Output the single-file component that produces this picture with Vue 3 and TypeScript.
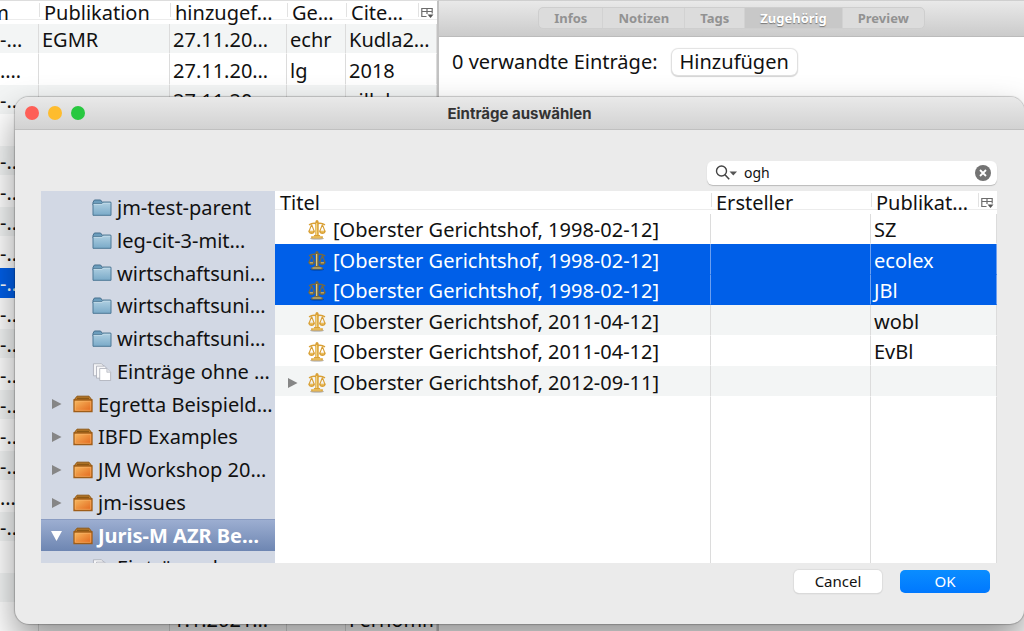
<script setup lang="ts">
import { ref } from 'vue'

interface BackRow {
  lead: string
  pub: string
  added: string
  court: string
  key: string
  selected?: boolean
}

interface Entry {
  title: string
  creator: string
  pub: string
  selected?: boolean
  expandable?: boolean
}

interface Node {
  label: string
  kind: 'folder' | 'unfiled' | 'library'
  open?: boolean
}

const row = (lead: string, pub = '', added = '', court = '', key = ''): BackRow => ({ lead, pub, added, court, key })

const backRows: BackRow[] = [
  row('-…', 'EGMR', '27.11.20…', 'echr', 'Kudla2…'),
  row('.…', '', '27.11.20…', 'lg', '2018'),
  row('-…', '', '27.11.20…', '', 'cillak…'),
  row(''),
  row('-…'),
  row('-…'),
  row('-…'),
  row('-…'),
  { ...row('-…'), selected: true },
  row('-…'),
  row('-…'),
  row('-…'),
  row('-…'),
  row('-…'),
  row('-…'),
  row('…'),
  row('-…'),
  row(''),
  row(''),
  row('', '', '1.1.2021…', '', 'Fernomm'),
]

const tabs = ['Infos', 'Notizen', 'Tags', 'Zugehörig', 'Preview']
const activeTab = ref('Zugehörig')
const query = ref('ogh')

const nodes: Node[] = [
  { label: 'jm-test-parent', kind: 'folder' },
  { label: 'leg-cit-3-mit…', kind: 'folder' },
  { label: 'wirtschaftsuni…', kind: 'folder' },
  { label: 'wirtschaftsuni…', kind: 'folder' },
  { label: 'wirtschaftsuni…', kind: 'folder' },
  { label: 'Einträge ohne …', kind: 'unfiled' },
  { label: 'Egretta Beispield…', kind: 'library' },
  { label: 'IBFD Examples', kind: 'library' },
  { label: 'JM Workshop 20…', kind: 'library' },
  { label: 'jm-issues', kind: 'library' },
  { label: 'Juris-M AZR Be…', kind: 'library', open: true },
  { label: 'Einträge ohne …', kind: 'unfiled' },
]

const entries: Entry[] = [
  { title: '[Oberster Gerichtshof, 1998-02-12]', creator: '', pub: 'SZ' },
  { title: '[Oberster Gerichtshof, 1998-02-12]', creator: '', pub: 'ecolex', selected: true },
  { title: '[Oberster Gerichtshof, 1998-02-12]', creator: '', pub: 'JBl', selected: true },
  { title: '[Oberster Gerichtshof, 2011-04-12]', creator: '', pub: 'wobl' },
  { title: '[Oberster Gerichtshof, 2011-04-12]', creator: '', pub: 'EvBl' },
  { title: '[Oberster Gerichtshof, 2012-09-11]', creator: '', pub: '', expandable: true },
]
</script>

<template>
  <div class="desktop">
    <svg class="defs" aria-hidden="true">
      <defs>
        <linearGradient id="folderFill" x1="0" y1="0" x2="0" y2="1">
          <stop offset="0" stop-color="#b0d0e2" />
          <stop offset="1" stop-color="#7aaac8" />
        </linearGradient>
        <linearGradient id="boxFill" x1="0" y1="0" x2="1" y2="1">
          <stop offset="0" stop-color="#f8bc62" />
          <stop offset="1" stop-color="#e2641a" />
        </linearGradient>
        <symbol id="picker" viewBox="0 0 13 12">
          <path d="M.8 1.500h10.400v5M.8 1v8.500h4.700M.8 4.500h10.400M6 1v6" fill="none" stroke="#6c6c6c" stroke-width="1.200" />
          <path d="M6.500 7.500h6l-3 3.500z" fill="#555" />
        </symbol>
        <symbol id="scales" viewBox="0 0 18 20">
          <ellipse cx="9" cy="18.600" rx="7" ry="1.100" fill="#000" opacity=".25" />
          <path d="M1 4.800Q5 2.400 9 3.800Q13 2.400 17 4.800" fill="none" stroke="currentColor" stroke-width="1.500" />
          <path d="M3.600 4.500L1 11.500M3.600 4.500L6.300 11.500M14.400 4.500L11.700 11.500M14.400 4.500L17 11.500" fill="none" stroke="currentColor" stroke-width="1.100" />
          <path d="M.2 10.800h6.800q-.6 3.200-3.400 3.200T.2 10.800zM11 10.800h6.800q-.6 3.200-3.400 3.200t-3.400-3.200z" fill="currentColor" />
          <path d="M7.300 2h3.400v13.200h-3.400z" fill="currentColor" />
          <path d="M8.700 3v12" stroke="#fbe08a" stroke-width="1" />
          <path d="M1.800 11.800h3.200M12.800 11.800h3.200" stroke="#fbe08a" stroke-width=".7" />
          <circle cx="9" cy="1.600" r="1.500" fill="currentColor" />
          <path d="M6.200 15h5.600l.6 1.200h2.400v2.400H3.200v-2.400h2.400z" fill="currentColor" />
          <path d="M4.500 17h9" stroke="#fbe08a" stroke-width=".8" />
        </symbol>
        <symbol id="folder" viewBox="0 0 20 18">
          <path d="M1 4.500V3.300L2.400 1h6.200l1.600 2.200h8.300v3H1z" fill="#6c9dbc" stroke="#47708e" stroke-width="1" />
          <path d="M1 4.500h9l1-1.200h8v13H1z" fill="url(#folderFill)" stroke="#4d7896" stroke-width="1" />
          <path d="M1.600 5.300h8.700l1-1.200h7" fill="none" stroke="#cfe3ee" stroke-width=".7" />
        </symbol>
        <symbol id="unfiled" viewBox="0 0 20 19">
          <path d="M1 .8h8.500l3 3v9.700H1z" fill="#f5f5f7" stroke="#a5a8b2" stroke-width=".8" />
          <path d="M4.200 3.300h8.500l3 3v9.700H4.200z" fill="#f9f9fa" stroke="#a5a8b2" stroke-width=".8" />
          <path d="M7.600 5.800h7.500l4 4v8.700H7.600z" fill="#fff" stroke="#a5a8b2" stroke-width=".8" />
          <path d="M15.100 5.800v4h4" fill="#e2e3e8" stroke="#b2b4bd" stroke-width=".7" />
        </symbol>
        <symbol id="library" viewBox="0 0 20 18">
          <path d="M4 1.200h12l3 3.800H1z" fill="#bd7c2a" stroke="#8d5715" stroke-width="1" />
          <path d="M4 3.300h12" stroke="#875414" stroke-width="1.200" />
          <path d="M1 5h18v11.500H1z" fill="url(#boxFill)" stroke="#9f5d18" stroke-width="1.300" />
          <path d="M2.300 6.300h15.400v9H2.300z" fill="none" stroke="#f8b66a" stroke-width=".6" />
        </symbol>
      </defs>
    </svg>

    <section class="library-pane">
      <table class="grid back-grid">
        <colgroup>
          <col class="w-lead" /><col class="w-pub" /><col class="w-added" /><col class="w-court" /><col /><col class="w-pick" />
        </colgroup>
        <thead>
          <tr>
            <th class="lead">m</th>
            <th>Publikation</th>
            <th>hinzugef…</th>
            <th>Ge…</th>
            <th>Cite…</th>
            <th class="pick">
              <button type="button" aria-label="Spalten"><svg><use href="#picker" /></svg></button>
            </th>
          </tr>
        </thead>
        <tbody>
          <tr v-for="(r, i) in backRows" :key="i" :class="{ selected: r.selected, shade: i % 2 === 0 }">
            <td class="lead">{{ r.lead }}</td>
            <td>{{ r.pub }}</td>
            <td>{{ r.added }}</td>
            <td>{{ r.court }}</td>
            <td colspan="2">{{ r.key }}</td>
          </tr>
        </tbody>
      </table>
    </section>

    <section class="item-pane">
      <nav class="tabbar">
        <div class="tabs">
          <button
            v-for="t in tabs"
            :key="t"
            type="button"
            :class="{ active: t === activeTab }"
            @click="activeTab = t"
          >{{ t }}</button>
        </div>
      </nav>
      <div class="related">
        <span>0 verwandte Einträge:</span>
        <button type="button" class="add">Hinzufügen</button>
      </div>
    </section>

    <div class="dialog" role="dialog" aria-labelledby="dialog-title">
      <header class="titlebar">
        <div class="lights">
          <button type="button" class="close" aria-label="Schließen"></button>
          <button type="button" class="minimize" aria-label="Minimieren"></button>
          <button type="button" class="maximize" aria-label="Maximieren"></button>
        </div>
        <h1 id="dialog-title">Einträge auswählen</h1>
      </header>

      <div class="content">
        <div class="search">
          <label for="search" aria-label="Suche">
            <svg viewBox="0 0 22 16">
              <circle cx="6.500" cy="6" r="5" fill="none" stroke="#444" stroke-width="1.400" />
              <path d="M10 9.800l4.200 4.400" stroke="#444" stroke-width="1.600" />
              <path d="M14.500 6.500h7.500l-3.750 4z" fill="#555" />
            </svg>
          </label>
          <input id="search" v-model="query" type="text" />
          <button type="button" aria-label="Suche leeren" @click="query = ''">
            <svg viewBox="0 0 16 16">
              <circle cx="8" cy="8" r="8" fill="#737373" />
              <path d="M5 5l6 6M11 5l-6 6" stroke="#fff" stroke-width="1.800" />
            </svg>
          </button>
        </div>

        <div class="browser">
          <ul class="tree">
            <li v-for="(n, i) in nodes" :key="i" :class="[n.kind, { open: n.open }]">
              <button v-if="n.kind === 'library'" type="button" class="twisty" :aria-label="n.label">
                <svg v-if="n.open" viewBox="0 0 11 10"><path d="M0 0h11L5.500 10z" fill="#fff" /></svg>
                <svg v-else viewBox="0 0 11 10"><path d="M1 0v10l9.500-5z" fill="#868686" /></svg>
              </button>
              <svg class="icon"><use :href="'#' + n.kind" /></svg>
              <span>{{ n.label }}</span>
            </li>
          </ul>

          <div class="results">
            <table class="grid result-grid">
              <colgroup>
                <col /><col class="w-creator" /><col class="w-result-pub" /><col class="w-pick" />
              </colgroup>
              <thead>
                <tr>
                  <th class="first">Titel</th>
                  <th>Ersteller</th>
                  <th>Publikat…</th>
                  <th class="pick">
                    <button type="button" aria-label="Spalten wählen"><svg><use href="#picker" /></svg></button>
                  </th>
                </tr>
              </thead>
              <tbody>
                <tr v-for="(e, i) in entries" :key="i" :class="{ selected: e.selected, shade: i % 2 === 1 }">
                  <td>
                    <div class="title">
                      <span class="toggle">
                        <button v-if="e.expandable" type="button" class="twisty" aria-label="Aufklappen">
                          <svg viewBox="0 0 11 10"><path d="M1 0v10l9.500-5z" fill="#868686" /></svg>
                        </button>
                      </span>
                      <svg class="scales"><use href="#scales" /></svg>
                      <span>{{ e.title }}</span>
                    </div>
                  </td>
                  <td>{{ e.creator }}</td>
                  <td colspan="2">{{ e.pub }}</td>
                </tr>
                <tr class="filler"><td></td><td></td><td colspan="2"></td></tr>
              </tbody>
            </table>
          </div>
        </div>

        <footer class="actions">
          <button type="button">Cancel</button>
          <button type="button" class="primary">OK</button>
        </footer>
      </div>
    </div>
  </div>
</template>

<style>
html,
body {
  margin: 0;
  height: 100%;
}
</style>

<style scoped>
.desktop {
  position: relative;
  display: flex;
  height: 100vh;
  overflow: hidden;
  background: #fff;
  color: #111;
  font-family: "Noto Sans", "Open Sans", sans-serif;
  font-size: 20px;
}
.desktop * {
  box-sizing: border-box;
}
.defs {
  position: absolute;
  width: 0;
  height: 0;
}
button {
  font: inherit;
  color: inherit;
  border: 0;
  padding: 0;
  background: none;
}

.library-pane {
  flex: 0 0 439px;
  overflow: hidden;
  border-right: 2px solid #c2c2c2;
  border-top: 1px solid #ddd;
}
.grid {
  width: 100%;
  table-layout: fixed;
  border-collapse: separate;
  border-spacing: 0;
}
.w-lead { width: 39px; }
.w-pub { width: 131px; }
.w-added { width: 117px; }
.w-court { width: 59px; }
.w-pick { width: 19px; }
.w-creator { width: 160px; }
.w-result-pub { width: 107px; }

.grid th {
  height: 23px;
  padding: 0 0 0 5px;
  font-weight: 400;
  line-height: 23px;
  text-align: left;
  white-space: nowrap;
  background:
    linear-gradient(#ececec, #ececec) 0 18px / 100% 1px no-repeat,
    linear-gradient(#e2e2e2, #e2e2e2) 0 2px / 1px 14px no-repeat;
}
.grid th.first,
.grid th.lead {
  background: linear-gradient(#ececec, #ececec) 0 18px / 100% 1px no-repeat;
}
.grid th.lead {
  padding: 0 30px 0 0;
  direction: rtl;
}
.grid th.pick {
  padding: 0 0 0 3px;
}
.pick button {
  display: flex;
}
.pick svg {
  width: 13px;
  height: 12px;
}
.grid td {
  height: 30px;
  padding: 3px 0 0 3px;
  line-height: 26px;
  white-space: nowrap;
  overflow: hidden;
  border-right: 1px solid #dcdcdc;
  border-bottom: 1px solid #fff;
}
.grid tr:nth-child(even) td {
  height: 31px;
}
.grid td.lead {
  padding-left: 0;
}
.shade td {
  background: #f3f5f5;
}
.grid tr.selected td {
  color: #fff;
  background: #005fe8;
  border-right-color: #6c9ff0;
  border-bottom-color: #005fe8;
}

.item-pane {
  flex: 1;
}
.tabbar {
  display: flex;
  justify-content: center;
  height: 37px;
  padding: 6px 0 7px;
  border-top: 1px solid #cfcfcf;
  border-bottom: 1px solid #bbb;
  background: linear-gradient(#e9e9e9, #cbcbcb);
}
.tabs {
  display: flex;
  border: 1px solid #cecece;
  border-radius: 5px;
  overflow: hidden;
  background: #dcdcdc;
}
.tabs button {
  padding: 0 15px;
  font-size: 13px;
  font-weight: 700;
  line-height: 21px;
  color: #929292;
  border-left: 1px solid #d2d2d2;
}
.tabs button:first-child {
  border-left: 0;
}
.tabs button.active {
  color: #fff;
  background: #c8c8c8;
  text-shadow: 0 1px 1px #777;
}
.related {
  display: flex;
  align-items: center;
  gap: 14px;
  padding: 11px 13px;
}
.add {
  padding: 0 8px;
  line-height: 26px;
  border-radius: 6px;
  background: #fff;
  box-shadow: 0 0 1px 1px #e2e2e2, 0 1px 1px 1px #d2d2d2;
}

.dialog {
  position: absolute;
  inset: 97px 0 7px 15px;
  display: flex;
  flex-direction: column;
  overflow: hidden;
  border-radius: 14px;
  background: #ebebeb;
  box-shadow: 0 0 1px 1px rgba(0, 0, 0, 0.2), 0 18px 36px rgba(0, 0, 0, 0.42);
}
.titlebar {
  display: grid;
  grid-template-columns: 1fr auto 1fr;
  align-items: center;
  flex: 0 0 33px;
  padding: 0 10px;
  border-bottom: 1px solid #c0c0c0;
  background: linear-gradient(#e9e9e9, #d2d2d2);
}
.titlebar h1 {
  margin: 0;
  font-family: Inter, Roboto, sans-serif;
  font-size: 15px;
  font-weight: 700;
  color: #333;
}
.lights {
  display: flex;
  gap: 9px;
}
.lights button {
  width: 14px;
  height: 14px;
  border-radius: 50%;
}
.close { background: #fe5f57; }
.minimize { background: #febc2e; }
.maximize { background: #28c840; }

.content {
  flex: 1;
  display: flex;
  flex-direction: column;
  min-height: 0;
  padding: 31px 27px 31px 26px;
}
.search {
  display: flex;
  align-items: center;
  align-self: flex-end;
  gap: 7px;
  width: 290px;
  height: 24px;
  padding: 0 6px 0 8px;
  border-radius: 6px;
  background: #fff;
  box-shadow: 0 1px 1px #bbb;
}
.search label,
.search button {
  display: flex;
}
.search label svg {
  width: 22px;
  height: 16px;
}
.search button svg {
  width: 16px;
  height: 16px;
}
.search input {
  flex: 1;
  min-width: 0;
  padding: 0;
  border: 0;
  outline: 0;
  font: inherit;
  font-size: 14px;
  line-height: 20px;
  color: #111;
  background: none;
}
.browser {
  flex: 1;
  display: flex;
  min-height: 0;
  margin: 6px 0 7px;
}
.tree {
  flex: 0 0 234px;
  margin: 0;
  padding: 0;
  list-style: none;
  overflow: hidden;
  background: #d2d8e4;
}
.tree li {
  display: flex;
  align-items: center;
  height: 33px;
  padding-left: 51px;
  line-height: 33px;
  white-space: nowrap;
}
.tree li:nth-child(4n + 3) {
  height: 32px;
}
.tree li.library {
  padding-left: 10px;
}
.tree li.open {
  color: #fff;
  font-weight: 700;
  background: linear-gradient(#9caed1, #6e86b2);
  border-top: 1px solid #8a9cc2;
}
.twisty {
  display: flex;
}
.twisty svg {
  width: 11px;
  height: 10px;
}
.tree .twisty {
  margin-right: 11px;
}
.icon {
  flex: none;
  width: 20px;
  height: 18px;
  margin-right: 5px;
}
.results {
  flex: 1;
  min-width: 0;
  background: #fff;
}
.result-grid {
  height: 100%;
}
.grid tr.filler td {
  height: auto;
  border-bottom: 0;
}
.title {
  display: flex;
  align-items: center;
}
.toggle {
  display: flex;
  flex: 0 0 30px;
  padding-left: 9px;
}
.scales {
  flex: none;
  width: 18px;
  height: 20px;
  margin-right: 7px;
  color: #d9a036;
}
.selected .scales {
  color: #76693f;
}

.actions {
  display: flex;
  justify-content: flex-end;
  gap: 18px;
  padding-right: 7px;
}
.actions button {
  width: 90px;
  font-size: 15px;
  line-height: 23px;
  border-radius: 5px;
  background: #fff;
  box-shadow: 0 0 1px 1px #ddd, 0 1px 1px #bbb;
}
.actions button:not(.primary) {
  width: 88px;
}
.actions .primary {
  color: #fff;
  background: linear-gradient(#0a8dff, #0078fe);
  box-shadow: none;
}
</style>
